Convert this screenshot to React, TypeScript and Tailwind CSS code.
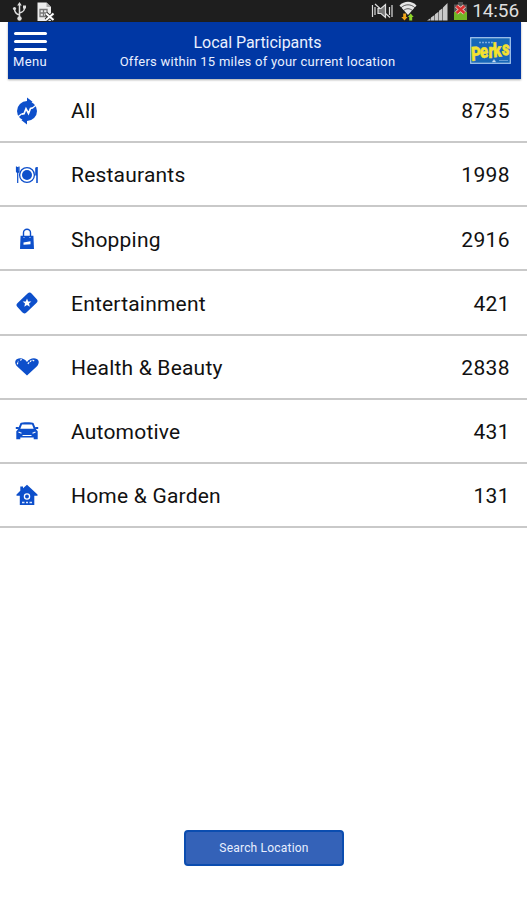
import type { ReactNode } from 'react'

const BLUE = '#0d4fcb'

function AllIcon() {
  return (
    <svg width="22" height="28" viewBox="0 0 22 28">
      <circle cx="11" cy="14" r="10" fill={BLUE} />
      <path d="M11 .5l5.500 4.300-5.500 4zM11 27.500l-5.500-4.300 5.500-4z" fill={BLUE} />
      <path d="M.5 21l5-4M16.500 11l5-4" stroke="#fff" strokeWidth="1.300" fill="none" />
      <path d="M5.500 17.200l2.500-.5 2-5 2.500 4.800 2-5 2.500-.7" stroke="#fff" strokeWidth="1.700" fill="none" />
    </svg>
  )
}

function RestaurantIcon() {
  return (
    <svg width="24" height="20" viewBox="0 0 24 20" fill="none" stroke={BLUE}>
      <circle cx="12" cy="10" r="7.400" strokeWidth="1.300" />
      <circle cx="12" cy="10" r="5" fill={BLUE} stroke="none" />
      <path d="M1.500 1.500v5l1.200 1.500L4 6.500v-5M2.700 2v16" strokeWidth="1.200" />
      <path d="M22 2v16M21 2.500v8" strokeWidth="1.600" />
    </svg>
  )
}

function ShoppingIcon() {
  return (
    <svg width="16" height="22" viewBox="0 0 16 22">
      <path d="M4.500 9V4.800a3.500 3.500 0 0 1 7 0V9" fill="none" stroke={BLUE} strokeWidth="1.400" />
      <path d="M1.600 7.800h12.800l.6 13.200H1z" fill={BLUE} />
      <path d="M4.500 14.500l7-1.300v3l-7 .6z" fill="#fff" />
      <path d="M4.300 9.500h1.400M10.300 9.500h1.400" stroke="#8db0ed" />
    </svg>
  )
}

function TicketIcon() {
  return (
    <svg width="22" height="22" viewBox="0 0 22 22">
      <rect x="1.200" y="4.500" width="19.600" height="13" rx="3" fill={BLUE} transform="rotate(-43 11 11)" />
      <path d="M11 6.500l1.200 2.900 3.200.2-2.400 2 .8 3.100-2.800-1.700-2.700 1.700.7-3.100-2.400-2 3.200-.2z" fill="#fff" />
    </svg>
  )
}

function HeartIcon() {
  return (
    <svg width="26" height="20" viewBox="0 0 26 20">
      <path d="M13 18.500L3 9.200C.5 6.500.8 3.200 3.200 2 6.500.4 10.500 1.700 13 5c2.500-3.300 6.500-4.600 9.800-3 2.400 1.200 2.700 4.500.2 7.200z" fill={BLUE} />
      <path d="M3.300 7.300l1-3.500M6 3.200l1.800-.7M13.800 6.800l3.700-3.500M18.500 3l1.800 1" stroke="#fff" strokeWidth="1.200" strokeDasharray="2 1" />
    </svg>
  )
}

function CarIcon() {
  return (
    <svg width="24" height="20" viewBox="0 0 24 20">
      <path d="M2.800 8.500L5.500 2C6.200 1 17.800 1 18.500 2l2.700 6.500 1.500 1.700v8h-4v-1.700H5.300v1.700h-4v-8z" fill={BLUE} />
      <path d="M7 3.500h10l1.700 4.200H5.300z" fill="#fff" />
      <path d="M.8 7h3M20.200 7h3" stroke={BLUE} strokeWidth="1.800" />
      <path d="M3.500 11l3 1.300M20.500 11l-3 1.300M7.500 14.500h9" stroke="#fff" strokeWidth="1.200" />
    </svg>
  )
}

function HomeIcon() {
  return (
    <svg width="22" height="22" viewBox="0 0 22 22">
      <path d="M11 .8l-4 3.500V2.500H4.300v4.300L.5 10.400v1.300h3.300V21h14.500v-9.300h3.200v-1.300z" fill={BLUE} />
      <circle cx="11" cy="12.500" r="2.600" fill={BLUE} stroke="#fff" strokeWidth="1.300" />
      <path d="M6 18.500h2.500M10 18.500h2M13.500 18.500H16" stroke="#dbe7ff" strokeWidth="1.400" />
    </svg>
  )
}

const categories: { name: string; count: number; icon: ReactNode }[] = [
  { name: 'All', count: 8735, icon: <AllIcon /> },
  { name: 'Restaurants', count: 1998, icon: <RestaurantIcon /> },
  { name: 'Shopping', count: 2916, icon: <ShoppingIcon /> },
  { name: 'Entertainment', count: 421, icon: <TicketIcon /> },
  { name: 'Health & Beauty', count: 2838, icon: <HeartIcon /> },
  { name: 'Automotive', count: 431, icon: <CarIcon /> },
  { name: 'Home & Garden', count: 131, icon: <HomeIcon /> },
]

function StatusBar() {
  return (
    <div className="flex h-[22px] items-center justify-between bg-[#1e1e1e] pl-3 pr-2 text-[#dedede]">
      <div className="flex items-center gap-2.5">
        <svg width="15" height="19" viewBox="0 0 15 19" fill="none" stroke="currentColor" strokeWidth="1.500">
          <path d="M7.500 3v13M7.500 13C4 12 2.500 10.500 2.500 7M7.500 11c3.500-1 5-2 5-5.500" />
          <path d="M7.500 0l2.300 3.500H5.200zM11 3.500h3v3h-3z" fill="currentColor" stroke="none" />
          <circle cx="2.500" cy="6.500" r="1.600" fill="currentColor" stroke="none" />
          <circle cx="7.500" cy="16.500" r="2.200" fill="currentColor" stroke="none" />
        </svg>
        <svg width="18" height="19" viewBox="0 0 18 19">
          <path d="M.5.500h9l4.500 4.500v14H.5z" fill="#ececec" />
          <path d="M9.500.5V5H14" fill="#aaa" />
          <path d="M3 7.500h7v7H3zM6.500 7.500v7M3 11h7" fill="none" stroke="#777" strokeWidth="1.300" />
          <path d="M9 11.500l7.500 6.500M16.500 11.500L9 18" stroke="#333" strokeWidth="4" />
          <path d="M9 11.500l7.500 6.500M16.500 11.500L9 18" stroke="#fff" strokeWidth="2" />
        </svg>
      </div>
      <div className="flex items-center">
        <svg width="22" height="16" viewBox="0 0 22 16" fill="none" stroke="currentColor" strokeWidth="1.200">
          <path d="M1.500 2v12M4 4v8M18.500 4v8M21 2v12M4 1l15 13.500" />
          <path d="M7 5.500h3l4.500-4v13l-4.500-4H7z" fill="#777" />
        </svg>
        <svg className="ml-1.5" width="18" height="20" viewBox="0 0 18 20">
          <path d="M.5 4.500C5-.5 13-.5 17.500 4.500L9 14z" fill="#e5e5e5" />
          <path d="M2 6.800c4-4 10-4 14 0M4.500 9.600c2.700-2.500 6.300-2.500 9 0" fill="none" stroke="#1e1e1e" strokeWidth=".7" />
          <path d="M5.500 19.500L2.300 16h1.900v-3.500h2.900V16h1.500z" fill="#f0a51c" />
          <path d="M10.200 19.500V16H8.700l3-3.500 3 3.500h-1.500v3.500z" fill="#8ed52a" />
        </svg>
        <svg className="ml-2.5" width="21" height="19" viewBox="0 0 21 19" fill="#c9c9c9">
          <path d="M0 18.500l3.500-2.300v2.300zM4 15.500l3.500-2.400v5.400H4zM8 12.200l3.500-2.500v8.800H8zM12 8.800l3.500-2.500v12.200H12zM16 5.500L20.500 1v17.500H16z" />
        </svg>
        <svg className="ml-1.5" width="13" height="18" viewBox="0 0 13 18">
          <path d="M4 0h5v2.500h4V18H0V2.500h4z" fill="#555" />
          <path d="M0 10h13v8H0z" fill="#72b626" />
          <path d="M2.500 4l8 7M10.500 4l-8 7" stroke="#f2c9c5" strokeWidth="4.200" />
          <path d="M2.500 4l8 7M10.500 4l-8 7" stroke="#d92f2f" strokeWidth="2.400" />
        </svg>
        <span className="ml-[5px] w-[47px] whitespace-nowrap text-right text-[19px] leading-[22px] tracking-[-0.1px]">14:56</span>
      </div>
    </div>
  )
}

function PerksLogo() {
  return (
    <svg className="overflow-visible" width="41" height="27" viewBox="0 0 41 27">
      <rect x=".7" y=".7" width="39.600" height="25.600" fill="#1767b8" stroke="#a9c9ee" strokeWidth="1.200" />
      <path d="M9 5.500h14" stroke="#79aade" strokeWidth="1.500" strokeDasharray="2 1" />
      <text
        transform="scale(1 1.300)"
        x="1.500 10.500 18.500 23.500 31.500"
        y="18.500 16.500 16 15.500 13.500"
        rotate="-4 -8 0 -4 6"
        fontFamily="Roboto, sans-serif"
        fontWeight="900"
        fontSize="15"
        fill="#f4e22e"
        stroke="#f4e22e"
        strokeWidth=".4"
      >
        Perks
      </text>
      <path d="M24 22.500l2 2.500h-4zM29 23.500h9" fill="#fff" stroke="#79aade" strokeWidth=".8" />
    </svg>
  )
}

function Header() {
  return (
    <header className="mr-1.5 ml-2 flex h-[57px] items-center bg-[#0037a4] text-[#eaf0ff] shadow-[0_1px_2px_rgba(0,0,0,0.35)]">
      <button className="flex w-[44px] flex-col items-center gap-[5px]">
        <span className="h-[3px] w-[33px] rounded-full bg-white" />
        <span className="h-[3px] w-[33px] rounded-full bg-white" />
        <span className="h-[3px] w-[33px] rounded-full bg-white" />
        <span className="-mt-0.5 text-[13px] leading-[15px] tracking-[0.3px]">Menu</span>
      </button>
      <div className="flex flex-1 flex-col items-center whitespace-nowrap pt-0.5 pr-[7px]">
        <h1 className="text-[16px] leading-5 tracking-[-0.03px]">Local Participants</h1>
        <p className="text-[13px] leading-[18px] tracking-[0.26px]">Offers within 15 miles of your current location</p>
      </div>
      <div className="mr-2.5">
        <PerksLogo />
      </div>
    </header>
  )
}

export default function App() {
  return (
    <div className="flex h-[900px] w-[527px] flex-col overflow-hidden bg-white font-[Roboto,sans-serif]">
      <StatusBar />
      <Header />
      <ul>
        {categories.map((cat) => (
          <li
            key={cat.name}
            className="flex h-[64.15px] items-center border-b-2 border-[#c9c9c9] pr-[17px] text-[21px] text-[#111]"
          >
            <span className="flex w-[71px] shrink-0 pl-[13px] pt-px">
              <span className="flex w-7 justify-center">{cat.icon}</span>
            </span>
            <span className="flex-1 pt-1 tracking-[0.2px]">{cat.name}</span>
            <span className="pt-1 tracking-[0.4px]">{cat.count}</span>
          </li>
        ))}
      </ul>
      <button className="mr-[183px] mb-[34px] ml-[184px] mt-auto h-[36px] rounded-[4px] border-2 border-[#0b4db0] bg-[#3462b8] text-[12px] tracking-[0.2px] text-[#e8efff]">
        Search Location
      </button>
    </div>
  )
}
